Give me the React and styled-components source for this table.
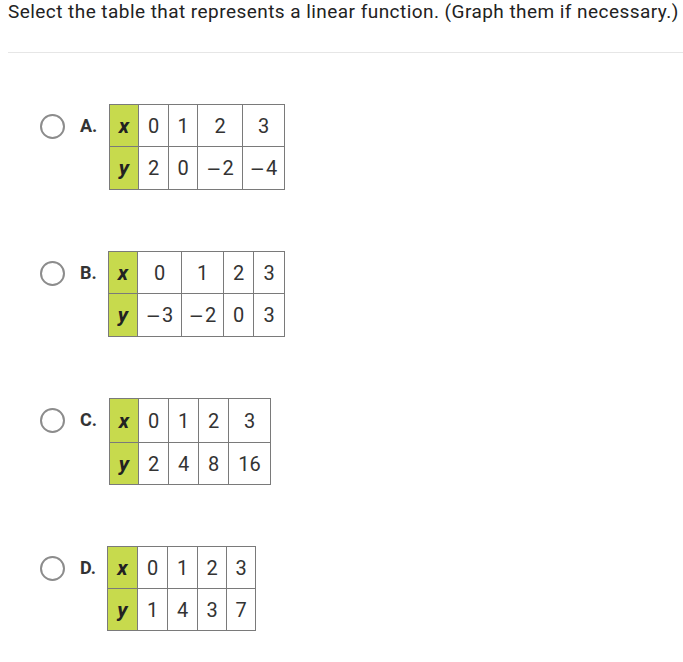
import React from "react";
import styled, { createGlobalStyle } from "styled-components";

const Global = createGlobalStyle`
  html, body { margin: 0; padding: 0; background: #fff; }
  body { font-family: Roboto, "Liberation Sans", sans-serif; color: #333; }
`;

const Page = styled.div`
  width: 683px;
  height: 662px;
  overflow: hidden;
  background: #fff;
`;

const Prompt = styled.div`
  margin-left: 8px;
  height: 52px;
  border-bottom: 1px solid #e6e6e6;
  font-size: 19px;
  letter-spacing: 0.45px;
  line-height: 24px;
  color: #222;
  white-space: nowrap;
`;

const List = styled.div`
  display: flex;
  flex-direction: column;
  gap: 61px;
  padding: 51px 0 0 40px;
`;

const Option = styled.div`
  display: flex;
  align-items: flex-start;
`;

const Radio = styled.span`
  box-sizing: border-box;
  width: 25px;
  height: 25px;
  margin-top: ${(p) => p.$top}px;
  border: 2px solid #8c8c8c;
  border-radius: 50%;
  flex: none;
`;

const Letter = styled.span`
  margin-left: 15px;
  width: 29px;
  margin-top: ${(p) => p.$top}px;
  font-weight: 700;
  font-size: 18px;
  line-height: 24px;
  color: #333;
`;

const Grid = styled.div`
  display: grid;
  grid-template-columns: ${(p) => p.$cols};
  grid-template-rows: ${(p) => p.$rows};
  border-top: 1px solid #7a7a7a;
  border-left: 1px solid #7a7a7a;
  margin-left: ${(p) => p.$shift}px;
`;

const Cell = styled.div`
  box-sizing: border-box;
  border-right: 1px solid #7a7a7a;
  border-bottom: 1px solid #7a7a7a;
  display: flex;
  align-items: center;
  justify-content: center;
  font-size: ${(p) => (p.$head ? 21 : 20)}px;
  background: ${(p) => (p.$head ? "#c7da4d" : "#fff")};
  font-weight: ${(p) => (p.$head ? 700 : 400)};
  font-style: ${(p) => (p.$head ? "italic" : "normal")};
  color: ${(p) => (p.$head ? "#222" : "#333")};
`;

const Minus = styled.span`
  font-family: "DejaVu Sans", sans-serif;
  font-size: 18px;
  margin-right: 1px;
`;

const Num = ({ v }) =>
  v.startsWith("-") ? (
    <>
      <Minus>{"\u2212"}</Minus>
      {v.slice(1)}
    </>
  ) : (
    v
  );

const options = [
  { letter: "A.", cols: [29, 30, 29, 45, 42], rows: [42, 43], shift: 0, x: ["0", "1", "2", "3"], y: ["2", "0", "-2", "-4"] },
  { letter: "B.", cols: [29, 44, 42, 30, 31], rows: [42, 43], shift: -1, x: ["0", "1", "2", "3"], y: ["-3", "-2", "0", "3"] },
  { letter: "C.", cols: [29, 30, 30, 30, 42], rows: [44, 42], shift: 0, x: ["0", "1", "2", "3"], y: ["2", "4", "8", "16"] },
  { letter: "D.", cols: [30, 30, 30, 29, 29], rows: [42, 42], shift: -2, x: ["0", "1", "2", "3"], y: ["1", "4", "3", "7"] },
];

export default function App() {
  return (
    <Page>
      <Global />
      <Prompt>Select the table that represents a linear function. (Graph them if necessary.)</Prompt>
      <List>
        {options.map((o) => (
          <Option key={o.letter}>
            <Radio $top={10} />
            <Letter $top={10}>{o.letter}</Letter>
            <Grid
              $shift={o.shift}
              $cols={o.cols.map((c) => c + "px").join(" ")}
              $rows={o.rows.map((r) => r + "px").join(" ")}
            >
              <Cell $head>x</Cell>
              {o.x.map((v, i) => (
                <Cell key={"x" + i}>
                  <Num v={v} />
                </Cell>
              ))}
              <Cell $head>y</Cell>
              {o.y.map((v, i) => (
                <Cell key={"y" + i}>
                  <Num v={v} />
                </Cell>
              ))}
            </Grid>
          </Option>
        ))}
      </List>
    </Page>
  );
}
